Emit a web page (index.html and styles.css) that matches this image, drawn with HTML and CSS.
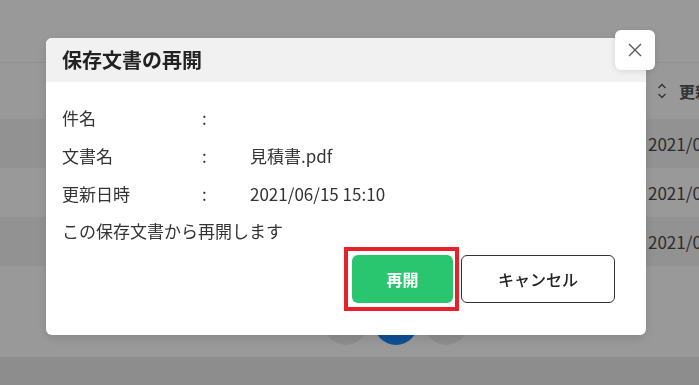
FILE: index.html
```html
<!DOCTYPE html>
<html lang="ja">
  <head>
    <meta charset="UTF-8" />
    <meta name="viewport" content="width=device-width, initial-scale=1.0" />
    <title>保存文書の再開</title>
    <link rel="stylesheet" href="styles.css">
  </head>
  <body>
    <div class="page">
      <div class="topbar"></div>
      <div class="table">
        <div class="table-head">
          <div class="col-main"></div>
          <div class="col-date">
            <svg class="sort" width="10" height="16" viewBox="0 0 10 16">
              <path d="M1.5 5 L5 1.5 L8.5 5 M1.5 11 L5 14.5 L8.5 11" stroke="#555" stroke-width="1.3" fill="none" />
            </svg>
            更新日時
          </div>
        </div>
        <div class="table-row striped">
          <div class="col-main"></div>
          <div class="col-date">2021/06/15 15:10</div>
        </div>
        <div class="table-row">
          <div class="col-main"></div>
          <div class="col-date">2021/06/14 10:02</div>
        </div>
        <div class="table-row striped">
          <div class="col-main"></div>
          <div class="col-date">2021/06/10 09:45</div>
        </div>
      </div>
      <div class="pager">
        <span class="page-dot"></span>
        <span class="page-dot current">1</span>
        <span class="page-dot"></span>
      </div>
      <div class="footer"></div>
    </div>

    <div class="overlay">
      <div class="modal">
        <div class="modal-head">保存文書の再開</div>
        <button class="close" type="button" aria-label="閉じる">
          <svg width="16" height="16" viewBox="0 0 16 16">
            <path d="M2 2 L14 14 M14 2 L2 14" stroke="#5a5a5a" stroke-width="1.4" fill="none" />
          </svg>
        </button>
        <div class="modal-body">
          <div class="info">
            <span>件名</span><span>:</span><span></span>
            <span>文書名</span><span>:</span><span>見積書.pdf</span>
            <span>更新日時</span><span>:</span><span>2021/06/15 15:10</span>
          </div>
          <p class="note">この保存文書から再開します</p>
          <div class="actions">
            <span class="mark">
              <button class="btn btn-ok" type="button">再開</button>
            </span>
            <button class="btn btn-cancel" type="button">キャンセル</button>
          </div>
        </div>
      </div>
    </div>
  </body>
</html>
```

FILE: styles.css
```css
body {
  margin: 0;
  font-family: "Noto Sans CJK JP", "Noto Sans", sans-serif;
  color: #333;
  overflow: hidden;
}

.page {
  width: 699px;
  height: 385px;
  background-color: #fff;
  display: flex;
  flex-direction: column;
  overflow: hidden;
}

.topbar {
  height: 62px;
  border-bottom: 1px solid #f2f2f2;
}

.table-head,
.table-row {
  display: flex;
  align-items: center;
}

.table-head {
  height: 56px;
  font-weight: bold;
  font-size: 16px;
  color: #555;
}

.table-row {
  height: 49px;
  font-size: 17px;
  color: #4a4a4a;
}

.striped {
  background-color: #f4f4f4;
}

.col-main {
  width: 648px;
  flex: none;
}

.col-date {
  white-space: nowrap;
  display: flex;
  align-items: center;
}

.table-head .col-date {
  margin-left: 9px;
}

.sort {
  flex: none;
  margin-right: 12px;
}

.pager {
  flex: 1;
  display: flex;
  align-items: flex-end;
  justify-content: center;
  gap: 6px;
  padding-bottom: 12px;
  padding-left: 92px;
}

.page-dot {
  width: 44px;
  height: 44px;
  border-radius: 50%;
  background-color: #ececec;
  display: flex;
  align-items: center;
  justify-content: center;
  color: #fff;
  font-size: 14px;
}

.page-dot.current {
  background-color: #1685f5;
}

.footer {
  height: 28px;
  background-color: #ebebeb;
}

.overlay {
  position: fixed;
  inset: 0;
  background-color: rgba(0, 0, 0, 0.4);
  padding: 38px 0 0 46px;
}

.modal {
  position: relative;
  width: 600px;
  background-color: #fff;
  border-radius: 6px;
  box-shadow: 0 3px 12px rgba(0, 0, 0, 0.12);
}

.modal-head {
  height: 44px;
  line-height: 44px;
  padding-left: 16px;
  background-color: #f1f1f1;
  border-radius: 6px 6px 0 0;
  font-size: 20px;
  font-weight: bold;
  color: #222;
}

.close {
  position: absolute;
  top: -8px;
  right: -9px;
  width: 40px;
  height: 40px;
  border: none;
  border-radius: 6px;
  background-color: #fff;
  box-shadow: 0 1px 6px rgba(0, 0, 0, 0.12);
  display: flex;
  align-items: center;
  justify-content: center;
  padding: 0;
}

.modal-body {
  padding: 16px 31px 24px 16px;
  font-size: 17px;
}

.info {
  display: grid;
  grid-template-columns: 140px 48px 1fr;
  grid-auto-rows: 38px;
  align-items: center;
}

.note {
  margin: 0;
  line-height: 38px;
}

.actions {
  display: flex;
  justify-content: flex-end;
  align-items: center;
  gap: 2px;
  margin-top: -3px;
}

.mark {
  display: flex;
  border: 4px solid #e8202a;
  padding: 4px 2px 4px 4px;
}

.btn {
  height: 48px;
  border-radius: 6px;
  font-family: inherit;
  font-size: 16px;
  cursor: pointer;
}

.btn-ok {
  width: 101px;
  border: none;
  background-color: #29c66f;
  color: #fff;
  font-weight: bold;
}

.btn-cancel {
  width: 154px;
  border: 1px solid #333;
  background-color: #fff;
  color: #222;
  font-weight: 500;
}
```
